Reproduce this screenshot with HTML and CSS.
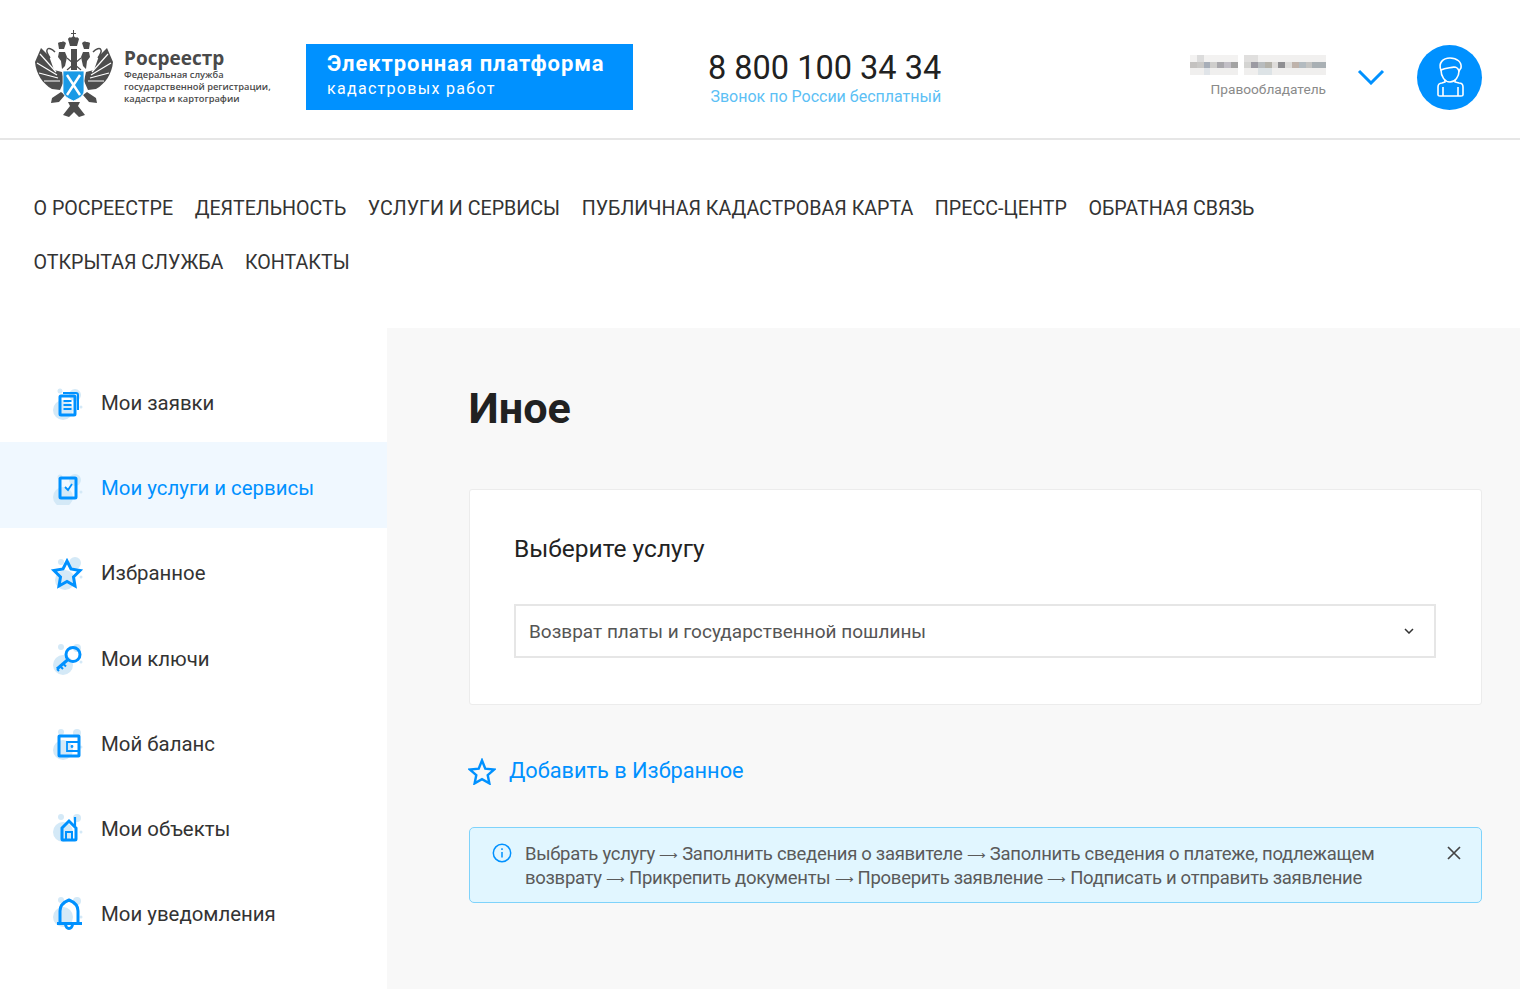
FILE: index.html
```html
<!DOCTYPE html>
<html lang="ru">
<head>
    <meta charset="UTF-8">
    <meta name="viewport" content="width=device-width, initial-scale=1.0">
    <title>Иное - Электронная платформа кадастровых работ</title>
    <link rel="stylesheet" href="styles.css">
</head>
<body>
    <header class="top-bar">
        <div class="logo">
            <svg class="logo-eagle" width="80" height="88" viewBox="0 0 80 88">
                <g fill="#4d4d4d">
                    <path d="M6 18L0 32c1 12 8 22 17 27l8 1 4-9-2-9-8-2-5-14z"/>
                    <path d="M72 18l6 14c-1 12-8 22-17 27l-8 1-4-9 2-9 8-2 5-14z"/>
                    <path d="M38 0h1v3h2v1h-2v3h-1V4h-2V3h2z"/>
                    <path d="M33 9c1-2 3-2 3-1 1-2 4-2 5 0 0-1 2-1 3 1l-2 7h-7z"/>
                    <path d="M23 13c1-1 2-1 4-1 1-1 3 0 4 1l-2 6h-5z"/>
                    <path d="M47 13c1-1 3-2 4-1 2 0 3 0 4 1l-1 6h-5z"/>
                    <path d="M24 22h6l2 5-2 9-3 3-1-8-3-4zM54 22h-6l-2 5 2 9 3 3 1-8 3-4z"/>
                    <rect x="36" y="19" width="6" height="21"/>
                    <path d="M26 62l4 3-6 7-8 1 1-5zM52 62l-4 3 6 7 8 1-1-5z"/>
                    <path d="M33 72h12l-2 4 7 9-6 2-5-5-5 5-6-2 7-9z"/>
                </g>
                <g fill="none" stroke="#fff" stroke-width="1.200">
                    <path d="M21 42L5 24M22 45L2 33M23 48L4 43M25 51L9 51"/>
                    <path d="M57 42l16-18M56 45l20-12M55 48l19-5M53 51l16 0"/>
                </g>
                <g fill="none" stroke="#4d4d4d" stroke-width="1.500">
                    <path d="M20 22c-3-3-7-5-8-2-1 2 1 5 3 8M58 22c3-3 7-5 8-2 1 2-1 5-3 8"/>
                    <path d="M32 28l14 12M46 28L32 40" stroke-width="1.200"/>
                </g>
                <path d="M28 41h21v20c0 5-6 8-10.500 10C34 69 28 66 28 61z" fill="#1a9ae6" stroke="#fff" stroke-width="0.800"/>
                <path d="M32 45l13 20M45 45L32 65" stroke="#fff" stroke-width="2.400" fill="none"/>
            </svg>
            <div class="logo-text">
                <div class="logo-name">Росреестр</div>
                <div class="logo-desc">Федеральная служба<br>государственной регистрации,<br>кадастра и картографии</div>
            </div>
        </div>
        <div class="platform-badge">
            <div class="platform-title">Электронная платформа</div>
            <div class="platform-sub">кадастровых работ</div>
        </div>
        <div class="phone-block">
            <div class="phone">8 800 100 34 34</div>
            <div class="phone-note">Звонок по России бесплатный</div>
        </div>
        <div class="user-block">
            <div class="user-info">
                <svg class="user-name" width="136" height="20" viewBox="0 0 20 3" preserveAspectRatio="none" shape-rendering="crispEdges">
                    <rect width="7" height="1" fill="#f3f2f1"/><rect x="1" width="1" height="1" fill="#dcdcdc"/><rect x="8" width="12" height="1" fill="#f1f0ef"/><rect x="8" width="2" height="1" fill="#e0dfde"/>
                    <rect x="0" y="1" width="1" height="1" fill="#c4c2c0"/><rect x="1" y="1" width="1" height="1" fill="#c9c8c6"/><rect x="2" y="1" width="1" height="1" fill="#a7aeb8"/><rect x="3" y="1" width="1" height="1" fill="#cfcecc"/><rect x="4" y="1" width="1" height="1" fill="#a9a8ac"/><rect x="5" y="1" width="1" height="1" fill="#c2bfc6"/><rect x="6" y="1" width="1" height="1" fill="#a3a3a3"/>
                    <rect x="8" y="1" width="1" height="1" fill="#d4d4d2"/><rect x="9" y="1" width="1" height="1" fill="#9b9aa2"/><rect x="10" y="1" width="1" height="1" fill="#b8bcbe"/><rect x="11" y="1" width="1" height="1" fill="#b4b2aa"/><rect x="12" y="1" width="1" height="1" fill="#dedcda"/><rect x="13" y="1" width="1" height="1" fill="#8f8f92"/><rect x="14" y="1" width="1" height="1" fill="#dddcda"/><rect x="15" y="1" width="1" height="1" fill="#bfb3ab"/><rect x="16" y="1" width="1" height="1" fill="#b3bbc0"/><rect x="17" y="1" width="1" height="1" fill="#c4c4c2"/><rect x="18" y="1" width="2" height="1" fill="#a9b0b4"/>
                    <rect y="2" width="7" height="1" fill="#f0efee"/><rect x="2" y="2" width="1" height="1" fill="#e0e4e8"/><rect x="8" y="2" width="12" height="1" fill="#f0efee"/><rect x="10" y="2" width="2" height="1" fill="#dde3e6"/>
                </svg>
                <div class="user-role">Правообладатель</div>
            </div>
            <svg class="user-arrow" width="28" height="16" viewBox="0 0 28 16">
                <path d="M2 2l12 12L26 2" fill="none" stroke="#0091ff" stroke-width="3"/>
            </svg>
            <div class="avatar">
                <svg width="30" height="40" viewBox="0 0 30 40" fill="none" stroke="#fff" stroke-width="1.600">
                    <path d="M6 13C3 6 8 1 15 1c7 0 12 4 11 10l-2 3c-1-3-3-4-5-4-4 1-9 1-13 3z"/>
                    <path d="M6 13c0 7 4 12 9 12s9-5 9-11"/>
                    <path d="M10 23v2l-3 1c-3 0-4 2-4 4v8c0 1 1 1 2 1h21c1 0 2 0 2-1v-8c0-2-1-4-4-4l-4-1v-2"/>
                    <path d="M8 30v9M23 30v9"/>
                </svg>
            </div>
        </div>
    </header>

    <nav class="main-nav">
        <a>О Росреестре</a>
        <a>Деятельность</a>
        <a>Услуги и сервисы</a>
        <a>Публичная кадастровая карта</a>
        <a>Пресс-центр</a>
        <a>Обратная связь</a>
        <a>Открытая служба</a>
        <a>Контакты</a>
    </nav>

    <div class="layout">
        <aside class="sidebar">
            <a class="side-item">
                <span class="side-icon">
                    <svg width="34" height="34" viewBox="0 0 34 34">
                        <g class="blobs"><circle cx="13" cy="24" r="10"/><circle cx="25" cy="9" r="6"/><circle cx="10" cy="5" r="2.500"/><circle cx="31" cy="21" r="1.500"/></g>
                        <g class="stroke"><rect x="10" y="10" width="15" height="19" rx="1"/><path d="M13 7h13c1 0 2 1 2 2v15" stroke-width="2"/><path d="M13.500 15h8M13.500 19h8M13.500 23h8" stroke-width="1.800"/></g>
                    </svg>
                </span>
                Мои заявки
            </a>
            <a class="side-item active">
                <span class="side-icon">
                    <svg width="34" height="34" viewBox="0 0 34 34">
                        <g class="blobs"><circle cx="13" cy="26" r="10"/><circle cx="25" cy="9" r="6"/><circle cx="10" cy="6" r="2.500"/><circle cx="31" cy="21" r="1.500"/></g>
                        <g class="stroke"><rect x="10" y="7" width="16" height="20" rx="1"/><path d="M15 16l3 3 4-6" stroke-width="1.800"/></g>
                    </svg>
                </span>
                Мои услуги и сервисы
            </a>
            <a class="side-item">
                <span class="side-icon">
                    <svg width="34" height="34" viewBox="0 0 34 34">
                        <g class="blobs"><circle cx="15" cy="24" r="10"/><circle cx="25" cy="7" r="6"/><circle cx="11" cy="6" r="3"/><circle cx="31" cy="21" r="1.500"/></g>
                        <path class="stroke" d="M17 5l4 8 9 1.500-6.500 6.500 1.500 9-8-4.500L9 30l1.500-9L4 14.500 13 13z"/>
                    </svg>
                </span>
                Избранное
            </a>
            <a class="side-item">
                <span class="side-icon">
                    <svg width="34" height="34" viewBox="0 0 34 34">
                        <g class="blobs"><circle cx="13" cy="23" r="10"/><circle cx="27" cy="6" r="4"/><circle cx="11" cy="5" r="3"/><circle cx="31" cy="20" r="1.500"/></g>
                        <g class="stroke"><circle cx="23" cy="12.500" r="7"/><path d="M18 17.500L7 27"/><path d="M10 24l3 3M13 21.500l3 3M7 27l2 2" stroke-width="2"/></g>
                    </svg>
                </span>
                Мои ключи
            </a>
            <a class="side-item">
                <span class="side-icon">
                    <svg width="34" height="34" viewBox="0 0 34 34">
                        <g class="blobs"><circle cx="13" cy="23" r="10"/><circle cx="27" cy="6" r="4"/><circle cx="11" cy="5" r="3"/><circle cx="31" cy="20" r="1.500"/></g>
                        <g class="stroke"><rect x="9" y="9" width="20" height="20" rx="0.500"/><path d="M29 15H17v9h12" stroke-width="1.800"/><circle cx="22" cy="19.500" r="0.800" stroke-width="1.200"/></g>
                    </svg>
                </span>
                Мой баланс
            </a>
            <a class="side-item">
                <span class="side-icon">
                    <svg width="34" height="34" viewBox="0 0 34 34">
                        <g class="blobs"><circle cx="13" cy="20" r="10"/><circle cx="27" cy="6" r="4"/><circle cx="11" cy="5" r="3"/><circle cx="31" cy="20" r="1.500"/></g>
                        <g class="stroke"><path d="M12 16l7-7 7 7v11c0 1 0 1-1 1H13c-1 0-1 0-1-1z"/><path d="M16 28v-8h6v8" stroke-width="2"/><path d="M25 14V5" stroke-width="2.200"/></g>
                    </svg>
                </span>
                Мои объекты
            </a>
            <a class="side-item">
                <span class="side-icon">
                    <svg width="34" height="34" viewBox="0 0 34 34">
                        <g class="blobs"><circle cx="13" cy="20" r="10"/><circle cx="27" cy="4" r="4"/><circle cx="11" cy="3" r="3"/><circle cx="31" cy="20" r="1.500"/></g>
                        <g class="stroke"><path d="M10 26V14C10 8 14 5 19 3c5 2 9 5 9 11v12"/><path d="M7 26.500h25"/><path d="M15.500 27c0 6 7 6 7 0"/></g>
                    </svg>
                </span>
                Мои уведомления
            </a>
        </aside>

        <main class="content">
            <h1>Иное</h1>

            <div class="service-card">
                <h3>Выберите услугу</h3>
                <div class="select-box">
                    <span>Возврат платы и государственной пошлины</span>
                    <svg width="10" height="6" viewBox="0 0 10 6"><path d="M1 1l4 4 4-4" fill="none" stroke="#333" stroke-width="1.500"/></svg>
                </div>
            </div>

            <a class="fav-link">
                <svg width="28" height="27" viewBox="0 0 34 33"><path d="M17 3l4 10 11 1-8 7 2 10-9-5-9 5 2-10-8-7 11-1z" fill="none" stroke="#0091ff" stroke-width="3"/></svg>
                Добавить в Избранное
            </a>

            <div class="info-box">
                <svg class="info-icon" width="20" height="20" viewBox="0 0 20 20" fill="none" stroke="#0091ff" stroke-width="1.500">
                    <circle cx="10" cy="10" r="8.700"/><path d="M10 9v5.500M10 5.300v1.800"/>
                </svg>
                <p>Выбрать услугу <span class="arrow">⟶</span> Заполнить сведения о заявителе <span class="arrow">⟶</span> Заполнить сведения о платеже, подлежащем<br>возврату <span class="arrow">⟶</span> Прикрепить документы <span class="arrow">⟶</span> Проверить заявление <span class="arrow">⟶</span> Подписать и отправить заявление</p>
                <svg class="info-close" width="16" height="16" viewBox="0 0 16 16"><path d="M2 2l12 12M14 2L2 14" stroke="#444" stroke-width="1.700"/></svg>
            </div>
        </main>
    </div>
</body>
</html>
```

FILE: styles.css
```css
* {
    margin: 0;
    padding: 0;
    box-sizing: border-box;
}

html, body {
    height: 100%;
}

body {
    font-family: Roboto, 'Liberation Sans', sans-serif;
    background: white;
    color: #212121;
    display: flex;
    flex-direction: column;
    overflow: hidden;
}

.top-bar {
    display: flex;
    align-items: center;
    height: 140px;
    flex-shrink: 0;
    padding: 16px 38px 0 34px;
    border-bottom: 2px solid #e6e6e6;
}

.logo {
    display: flex;
    align-items: center;
    width: 272px;
}

.logo-eagle {
    flex-shrink: 0;
    margin: -6px 9px 0 1px;
}

.logo-name {
    font-family: 'Open Sans', sans-serif;
    font-size: 19px;
    font-weight: 700;
    line-height: 22px;
    color: #4a4a4a;
}

.logo-desc {
    font-family: 'Open Sans', sans-serif;
    font-size: 9.3px;
    font-weight: 600;
    line-height: 12px;
    color: #4a4a4a;
    white-space: nowrap;
}

.logo-text {
    margin-top: -2px;
}

.platform-badge {
    width: 327px;
    height: 66px;
    background: #0091ff;
    color: white;
    padding: 5px 21px;
    flex-shrink: 0;
}

.platform-title {
    font-size: 22px;
    font-weight: 700;
    letter-spacing: 0.95px;
    line-height: 29px;
}

.platform-sub {
    font-size: 16px;
    letter-spacing: 1.3px;
    line-height: 22px;
}

.phone-block {
    margin-left: 75px;
    text-align: right;
}

.phone {
    font-size: 32.5px;
    line-height: 40px;
}

.phone-note {
    font-size: 16px;
    line-height: 18px;
    color: #5cc0f5;
}

.user-block {
    display: flex;
    align-items: center;
    margin-left: auto;
}

.user-info {
    text-align: right;
    padding-bottom: 2px;
}

.user-name {
    display: block;
    margin-left: auto;
}

.user-role {
    font-size: 13.7px;
    color: #8a8a8a;
    margin-top: 6px;
}

.user-arrow {
    margin-left: 31px;
    margin-right: 32px;
}

.avatar {
    width: 65px;
    height: 65px;
    border-radius: 50%;
    background: #0091ff;
    display: flex;
    align-items: center;
    justify-content: center;
}

.main-nav {
    display: flex;
    flex-wrap: wrap;
    flex-shrink: 0;
    column-gap: 21.6px;
    padding: 42px 240px 39px 33.5px;
    height: 188px;
}

.main-nav a {
    font-size: 19.65px;
    line-height: 54px;
    text-transform: uppercase;
    color: #333;
}

.layout {
    display: flex;
    flex: 1;
}

.sidebar {
    width: 387px;
    flex-shrink: 0;
    padding-top: 29px;
}

.side-item {
    display: flex;
    align-items: center;
    height: 85.3px;
    padding: 6px 0 0 50px;
    font-size: 20.4px;
    color: #333;
}

.side-item.active {
    background: #f0f8ff;
    color: #0091ff;
}

.side-icon {
    display: flex;
    width: 34px;
    height: 34px;
    margin-right: 17px;
}

.blobs {
    fill: #d4e9f7;
}

.stroke {
    fill: none;
    stroke: #0091ff;
    stroke-width: 3;
}

.content {
    flex: 1;
    background: #f8f8f8;
    padding: 53px 38px 0 81.5px;
}

h1 {
    font-size: 43.2px;
    font-weight: 700;
    line-height: 56px;
    margin-bottom: 52px;
}

.service-card {
    height: 216px;
    background: white;
    border: 1px solid #ececec;
    border-radius: 3px;
    padding: 44px 45px 0 44.5px;
}

.service-card h3 {
    font-size: 24.5px;
    font-weight: 400;
    line-height: 30px;
    color: #222;
    margin-bottom: 40px;
}

.select-box {
    display: flex;
    align-items: center;
    justify-content: space-between;
    height: 54px;
    border: 2px solid #e6e6e6;
    padding: 0 20px 0 13px;
    font-size: 19px;
    color: #555;
}

.fav-link {
    display: flex;
    align-items: center;
    gap: 13px;
    margin-top: 50px;
    margin-left: -0.5px;
    font-size: 21.75px;
    line-height: 32px;
    color: #0091ff;
}

.info-box {
    display: flex;
    align-items: flex-start;
    height: 76px;
    margin-top: 40px;
    padding: 15px 19px 0 22px;
    background: #e1f6ff;
    border: 1px solid #7fd3fb;
    border-radius: 5px;
    font-size: 18.5px;
    line-height: 23px;
    letter-spacing: -0.3px;
    color: #5a5a5a;
}

.info-icon {
    flex-shrink: 0;
    margin: 0 13.5px 0 0;
}

.info-box p {
    flex: 1;
    white-space: nowrap;
}

.arrow {
    font-size: 12.5px;
}

.info-close {
    flex-shrink: 0;
    margin-top: 2px;
}
```
